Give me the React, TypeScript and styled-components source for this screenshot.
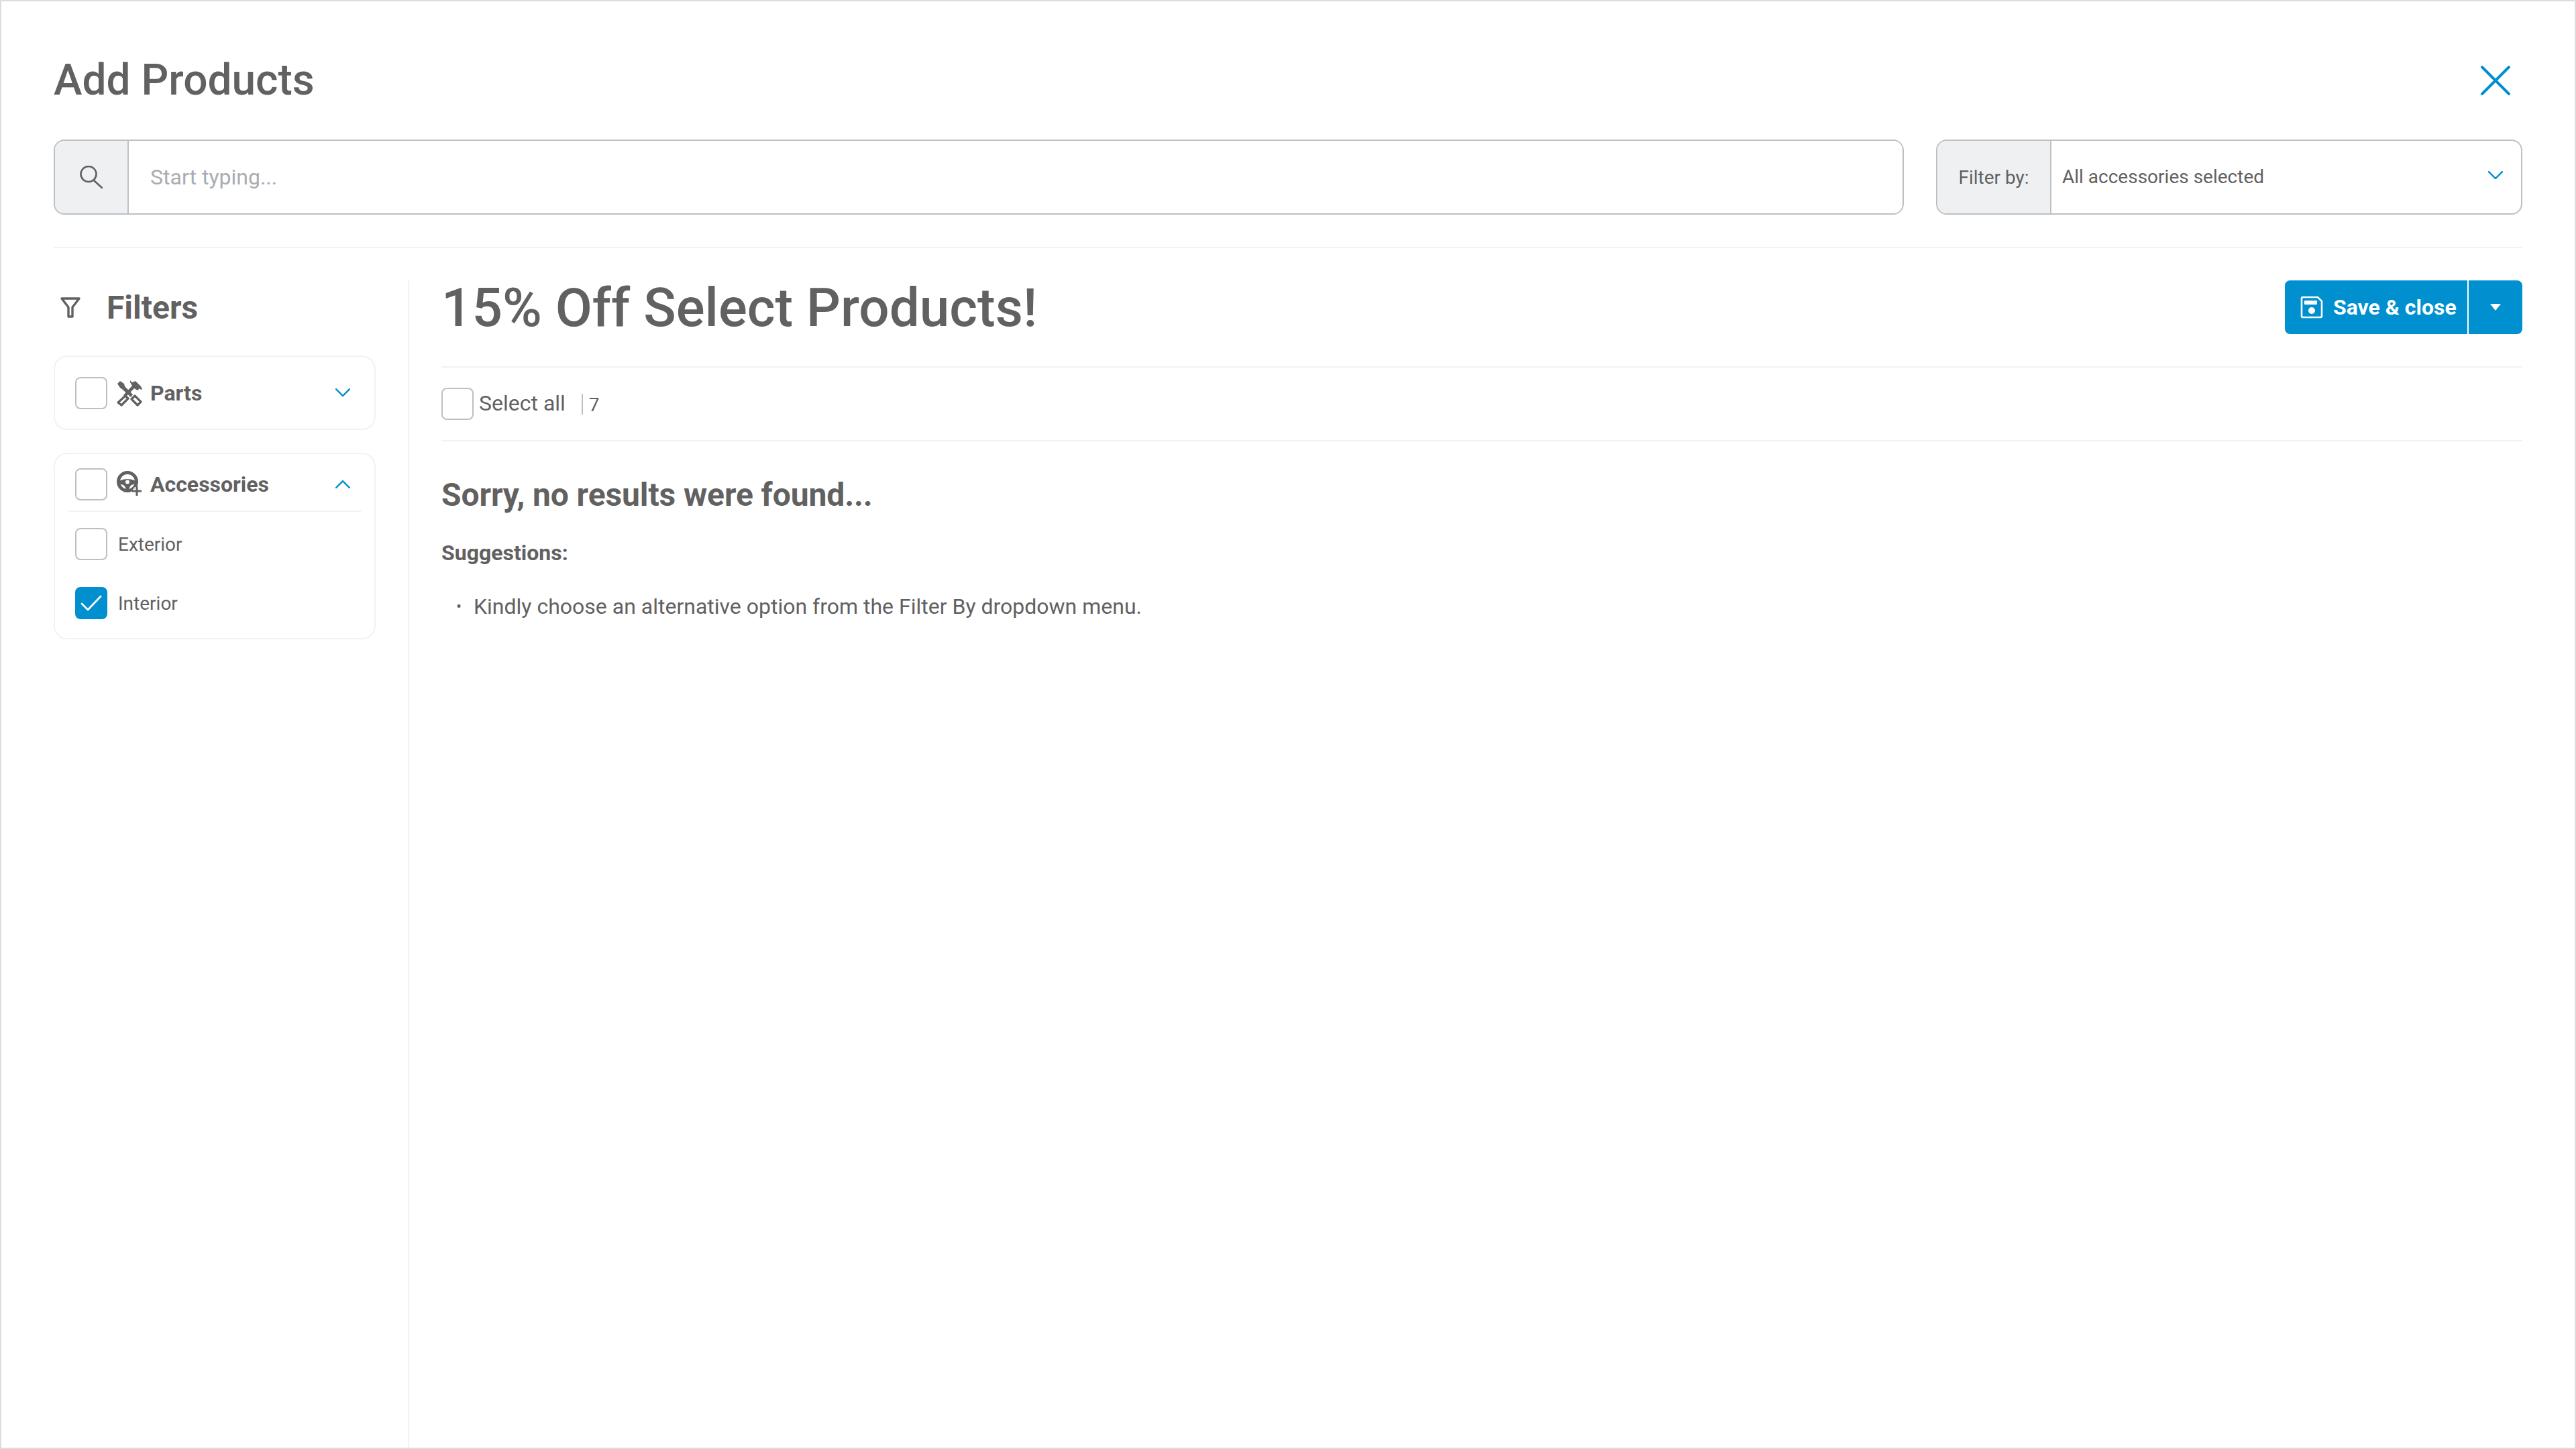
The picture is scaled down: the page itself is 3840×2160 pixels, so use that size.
import React from 'react';
import styled, { createGlobalStyle } from 'styled-components';

const blue = '#008fcf';
const ink = '#616161';
const fieldLine = '#bcc0c4';
const softLine = '#f1f2f3';

const GlobalStyle = createGlobalStyle`
  html, body { margin: 0; padding: 0; background: #fff; }
  * { box-sizing: border-box; }
  body { font-family: Roboto, "Liberation Sans", sans-serif; color: ${ink}; }
`;

const Frame = styled.div`
  width: 3840px;
  height: 2160px;
  border: 2px solid #dcdcdc;
  padding: 78px 78px 0;
  display: flex;
  flex-direction: column;
  overflow: hidden;
`;

const Header = styled.header`
  height: 80px;
  display: flex;
  align-items: center;
  justify-content: space-between;
  flex: none;
`;

const Title = styled.h1`
  margin: 0;
  font-size: 64px;
  line-height: 82px;
  font-weight: 500;
`;

const CloseButton = styled.button`
  border: 0;
  background: none;
  padding: 0;
  margin-right: 18px;
  width: 44px;
  height: 44px;
  display: flex;
`;

const SearchRow = styled.div`
  margin-top: 48px;
  display: flex;
  gap: 48px;
  flex: none;
  padding-bottom: 48px;
  border-bottom: 2px solid ${softLine};
`;

const Field = styled.div<{ $width: string }>`
  height: 112px;
  width: ${(p) => p.$width};
  flex: none;
  display: flex;
  border: 2px solid ${fieldLine};
  border-radius: 16px;
  overflow: hidden;
`;

const Addon = styled.div<{ $width: number }>`
  width: ${(p) => p.$width}px;
  flex: none;
  display: flex;
  align-items: center;
  justify-content: center;
  background: #eff0f2;
  border-right: 2px solid ${fieldLine};
  font-size: 28px;
`;

const SearchInput = styled.input`
  flex: 1;
  border: 0;
  outline: 0;
  padding: 0 32px;
  font: 400 32px Roboto, sans-serif;
  color: ${ink};
  &::placeholder { color: #a9adb1; opacity: 1; }
`;

const SelectBox = styled.div`
  flex: 1;
  display: flex;
  align-items: center;
  justify-content: space-between;
  padding: 0 27px 6px 16px;
  font-size: 28px;
  line-height: 36px;
  & > span { margin-top: 6px; }
`;

const Body = styled.div`
  flex: 1;
  display: flex;
  margin-top: 48px;
  min-height: 0;
`;

const Sidebar = styled.aside`
  width: 530px;
  flex: none;
  padding-right: 48px;
  border-right: 2px solid ${softLine};
`;

const FilterHeading = styled.div`
  height: 80px;
  display: flex;
  align-items: center;
  gap: 39px;
  padding-left: 10px;
  font-size: 48px;
  font-weight: 700;
  margin-bottom: 32px;
`;

const Card = styled.section`
  border: 2px solid ${softLine};
  border-radius: 20px;
  padding: 0 20px;
  margin-bottom: 34px;
`;

const CardHead = styled.div<{ $open?: boolean }>`
  height: ${(p) => (p.$open ? 86 : 107)}px;
  display: flex;
  align-items: center;
  padding: ${(p) => (p.$open ? 6 : 0)}px 16px 0 10px;
  border-bottom: ${(p) => (p.$open ? `2px solid ${softLine}` : '0')};
  font-size: 32px;
  font-weight: 700;
`;

const CardLabel = styled.span`
  flex: 1;
  margin-left: 12px;
`;

const IconSlot = styled.span`
  width: 38px;
  height: 40px;
  margin-left: 14px;
  flex: none;
  display: flex;
`;

const Option = styled.label`
  height: 88px;
  display: flex;
  align-items: center;
  gap: 16px;
  padding-left: 10px;
  font-size: 28px;
`;

const OptionList = styled.div`
  padding: 4px 0 8px;
`;

const Box = styled.span<{ $checked?: boolean }>`
  width: 48px;
  height: 48px;
  flex: none;
  border-radius: 8px;
  border: 2px solid ${(p) => (p.$checked ? blue : fieldLine)};
  background: ${(p) => (p.$checked ? blue : '#fff')};
  display: flex;
  align-items: center;
  justify-content: center;
`;

const Main = styled.main`
  flex: 1;
  padding-left: 48px;
  min-width: 0;
`;

const TopRow = styled.div`
  height: 130px;
  display: flex;
  justify-content: space-between;
  align-items: flex-start;
  border-bottom: 2px solid ${softLine};
`;

const Promo = styled.h2`
  margin: 0;
  font-size: 80px;
  line-height: 82px;
  font-weight: 500;
`;

const SplitButton = styled.div`
  display: flex;
  height: 80px;
  border-radius: 8px;
  overflow: hidden;
  background: ${blue};
  color: #fff;
`;

const SaveButton = styled.button`
  width: 272px;
  border: 0;
  padding: 0 0 0 23px;
  background: none;
  color: inherit;
  display: flex;
  align-items: center;
  gap: 15px;
  font: 700 32px Roboto, sans-serif;
`;

const CaretButton = styled.button`
  width: 82px;
  border: 0;
  border-left: 2px solid #fff;
  padding: 0;
  background: none;
  display: flex;
  align-items: center;
  justify-content: center;
`;

const SelectRow = styled.div`
  height: 110px;
  display: flex;
  align-items: center;
  border-bottom: 2px solid ${softLine};
  font-size: 32px;
`;

const SelectLabel = styled.span`
  margin-left: 8px;
  margin-top: -2px;
`;

const Count = styled.span`
  margin-left: 24px;
  padding-left: 9px;
  border-left: 2px solid ${fieldLine};
  height: 31px;
  line-height: 33px;
  font-size: 28px;
`;

const Empty = styled.h3`
  margin: 52px 0 0;
  font-size: 48px;
  line-height: 56px;
  font-weight: 700;
  letter-spacing: -0.1px;
`;

const SuggestTitle = styled.div`
  margin-top: 38px;
  font-size: 32px;
  line-height: 40px;
  font-weight: 700;
`;

const SuggestList = styled.ul`
  margin: 40px 0 0;
  padding: 0 0 0 22px;
  list-style: none;
  font-size: 32px;
  line-height: 40px;
  li { display: flex; }
  li::before { content: '•'; width: 26px; flex: none; font-size: 24px; }
`;

const Chevron = ({ up, size = 22 }: { up?: boolean; size?: number }) => (
  <svg width={size} height={size * 0.55} viewBox="0 0 22 12" fill="none" stroke={blue} strokeWidth="2.4" strokeLinecap="round" strokeLinejoin="round">
    <path d={up ? 'M1 11 11 1l10 10' : 'M1 1l10 10L21 1'} />
  </svg>
);

const SearchIcon = () => (
  <svg width="34" height="34" viewBox="0 0 34 34" fill="none" stroke={ink} strokeWidth="2.6" strokeLinecap="round">
    <circle cx="13" cy="12.5" r="11.5" />
    <path d="M21 22l12 11" />
  </svg>
);

const FunnelIcon = () => (
  <svg width="30" height="31" viewBox="0 0 30 31" fill="none" stroke={ink} strokeWidth="3.4" strokeLinejoin="round">
    <path d="M2 2h26L18 15v14h-6V15z" />
  </svg>
);

const PartsIcon = () => (
  <svg width="38" height="40" viewBox="0 0 38 40" fill="none" stroke={ink}>
    <path d="M1 6l4-4 6 4 1 4 12 12-3 4L8 14l-3-2z" fill={ink} stroke="none" />
    <path d="M27 24l9 9-5 5-9-9z" strokeWidth="3.2" strokeLinejoin="round" />
    <path d="M20 1l3 3 5-2 8 8 2 4-2 1-2-2-3 3-5-3-13 13-3-3 13-14-3-5z" fill={ink} stroke="none" />
    <path d="M13 24l4 4-10 10-5-4z" strokeWidth="3.2" strokeLinejoin="round" />
  </svg>
);

const WheelIcon = () => (
  <svg width="38" height="38" viewBox="0 0 38 38" fill="none">
    <circle cx="16" cy="16" r="13.5" stroke={ink} strokeWidth="5" />
    <path d="M3 15Q16 9 29 15v4l-7 2q-4 3-4 9h-4q0-6-4-9l-7-2z" fill={ink} />
    <circle cx="16" cy="16.5" r="3" fill="#fff" />
    <path d="M30 24v13M24 30h13" stroke="#fff" strokeWidth="7" />
    <path d="M30 23v14M23 30h14" stroke={ink} strokeWidth="3" />
  </svg>
);

const CheckIcon = () => (
  <svg width="32" height="24" viewBox="0 0 32 24" fill="none" stroke="#fff" strokeWidth="2.8" strokeLinecap="round" strokeLinejoin="round">
    <path d="M2 13l9 9L30 2" />
  </svg>
);

const DiskIcon = () => (
  <svg width="34" height="34" viewBox="0 0 34 34" fill="none">
    <path d="M2 4a2 2 0 0 1 2-2h22l6 6v22a2 2 0 0 1-2 2H4a2 2 0 0 1-2-2z" stroke="#fff" strokeWidth="2.6" />
    <rect x="6" y="7" width="19" height="6" rx="1" fill="#fff" />
    <circle cx="17" cy="22" r="5" fill="#fff" />
  </svg>
);

export default function App() {
  return (
    <Frame>
      <GlobalStyle />
      <Header>
        <Title>Add Products</Title>
        <CloseButton aria-label="Close">
          <svg width="44" height="44" viewBox="0 0 44 44" fill="none" stroke={blue} strokeWidth="4" strokeLinecap="round">
            <path d="M2 2l40 40M42 2L2 42" />
          </svg>
        </CloseButton>
      </Header>

      <SearchRow>
        <Field $width="2758px">
          <Addon $width={110}><SearchIcon /></Addon>
          <SearchInput placeholder="Start typing..." />
        </Field>
        <Field $width="874px">
          <Addon $width={170}>Filter by:</Addon>
          <SelectBox>
            <span>All accessories selected</span>
            <Chevron />
          </SelectBox>
        </Field>
      </SearchRow>

      <Body>
        <Sidebar>
          <FilterHeading>
            <FunnelIcon />
            Filters
          </FilterHeading>
          <Card>
            <CardHead>
              <Box />
              <IconSlot><PartsIcon /></IconSlot>
              <CardLabel>Parts</CardLabel>
              <Chevron />
            </CardHead>
          </Card>
          <Card>
            <CardHead $open>
              <Box />
              <IconSlot><WheelIcon /></IconSlot>
              <CardLabel>Accessories</CardLabel>
              <Chevron up />
            </CardHead>
            <OptionList>
              <Option><Box />Exterior</Option>
              <Option><Box $checked><CheckIcon /></Box>Interior</Option>
            </OptionList>
          </Card>
        </Sidebar>

        <Main>
          <TopRow>
            <Promo>15% Off Select Products!</Promo>
            <SplitButton>
              <SaveButton><DiskIcon />Save &amp; close</SaveButton>
              <CaretButton aria-label="More">
                <svg width="16" height="10" viewBox="0 0 16 10" fill="#fff"><path d="M0 0h16L8 10z" /></svg>
              </CaretButton>
            </SplitButton>
          </TopRow>
          <SelectRow>
            <Box />
            <SelectLabel>Select all</SelectLabel>
            <Count>7</Count>
          </SelectRow>
          <Empty>Sorry, no results were found...</Empty>
          <SuggestTitle>Suggestions:</SuggestTitle>
          <SuggestList>
            <li>Kindly choose an alternative option from the Filter By dropdown menu.</li>
          </SuggestList>
        </Main>
      </Body>
    </Frame>
  );
}
